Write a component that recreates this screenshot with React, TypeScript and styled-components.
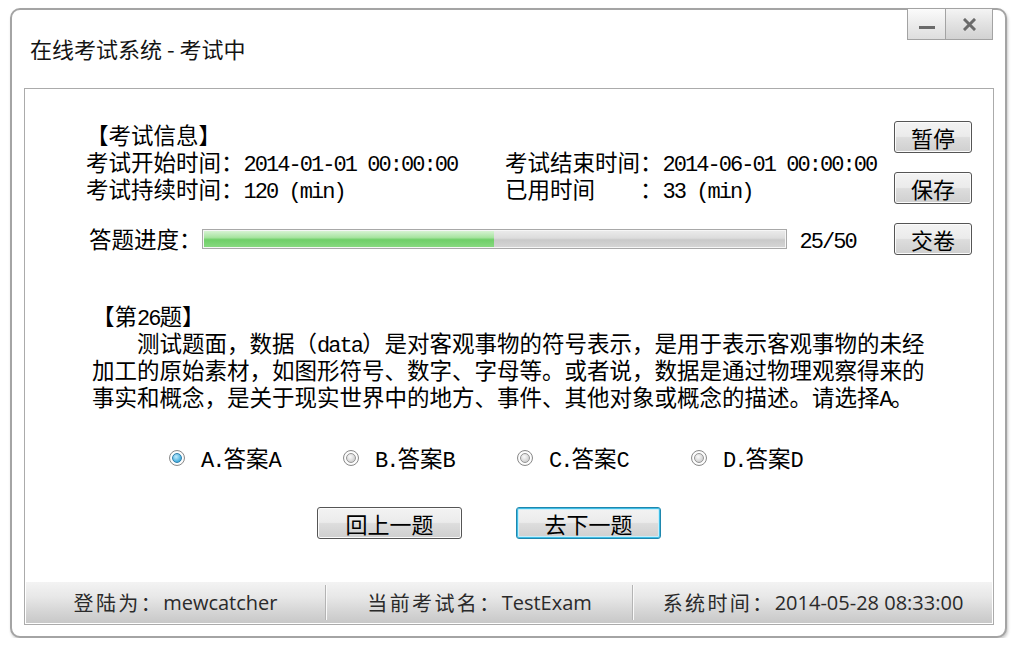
import React from "react";
import styled, { createGlobalStyle, css } from "styled-components";

const GlobalStyle = createGlobalStyle`
  html, body {
    margin: 0;
    padding: 0;
    background: #ffffff;
  }
  body {
    font-family: "Noto Sans CJK SC", sans-serif;
    color: #000;
  }
  * { box-sizing: border-box; }
`;

const CJK = `"Noto Sans CJK SC", sans-serif`;

const Window = styled.div`
  margin: 8px 11px 0 10px;
  height: 630px;
  border: 2px solid #a4a4a4;
  border-radius: 10px;
  background: #fff;
  box-shadow: 1px 2px 3px rgba(0, 0, 0, 0.22);
  display: flex;
  flex-direction: column;
`;

const TitleBar = styled.div`
  height: 78px;
  display: flex;
  align-items: flex-start;
  padding: 0 12px 0 18px;
`;

const Title = styled.div`
  font-family: ${CJK};
  font-size: 22px;
  line-height: 28px;
  padding-top: 24px;
  color: #141414;
`;

const WinButtons = styled.div`
  margin-left: auto;
  margin-top: -2px;
  display: flex;
`;

const WinButton = styled.div<{ $w: number; $close?: boolean }>`
  width: ${(p) => p.$w}px;
  height: 32px;
  border: 1px solid #a3a3a3;
  display: flex;
  align-items: center;
  justify-content: center;
  background: ${(p) =>
    p.$close
      ? "linear-gradient(#f4f4f4, #e2e2e2 50%, #d2d2d2)"
      : "linear-gradient(#fbfbfb, #ececec 50%, #dedede)"};
  & + & {
    border-left: none;
  }
`;

const Panel = styled.div`
  flex: 1;
  margin: 0 11px 11px 12px;
  border: 1px solid #ababab;
  display: flex;
  flex-direction: column;
`;

const Content = styled.div`
  flex: 1;
  display: flex;
  flex-direction: column;
  font-family: ${CJK};
  font-size: 22.5px;
  line-height: 27px;
  color: #000;
`;

const TopSection = styled.div`
  display: flex;
  align-items: flex-start;
  padding: 32px 21px 0 61px;
`;

const Info = styled.div`
  flex: 1;
`;

const Heading = styled.div`
  height: 27px;
  line-height: 27px;
  white-space: nowrap;
`;

const InfoGrid = styled.div`
  display: grid;
  grid-template-columns: 419px auto;
  grid-auto-rows: 27px;
  white-space: nowrap;
`;

const Mono = styled.span`
  font-family: "Liberation Mono", monospace;
  font-size: 22px;
  letter-spacing: -1.95px;
  line-height: 0;
  white-space: pre;
`;

const ProgressRow = styled.div`
  display: flex;
  align-items: center;
  height: 27px;
  margin-top: 23px;
  padding-left: 3px;
  white-space: nowrap;
`;

const Bar = styled.div`
  width: 585px;
  height: 20px;
  border: 1px solid #a8a8a8;
  box-shadow: inset 0 0 0 1px #f6f6f6;
  background: linear-gradient(#ececec, #dcdcdc 45%, #c9c9c9 55%, #d6d6d6);
  padding: 1px;
  display: flex;
`;

const BarFill = styled.div`
  height: 100%;
  background: linear-gradient(#d6f3d2, #a8e4a1 40%, #6fcf68 55%, #86d97f);
`;

const Count = styled.span`
  margin-left: 13px;
`;

const SideButtons = styled.div`
  display: flex;
  flex-direction: column;
  gap: 19px;
`;

const PushButton = styled.div<{ $w: number; $focused?: boolean }>`
  width: ${(p) => p.$w}px;
  height: 32px;
  border-radius: 3px;
  border: 1px solid #555555;
  display: flex;
  align-items: center;
  justify-content: center;
  font-family: ${CJK};
  font-size: 22px;
  line-height: 1;
  color: #000;
  background: linear-gradient(#f3f3f3, #ebebeb 48%, #dddddd 52%, #cfcfcf);
  box-shadow: inset 0 0 0 1px #fbfbfb;
  ${(p) =>
    p.$focused &&
    css`
      border-color: #1f87ad;
      box-shadow: inset 0 0 0 1px #3fbde6, inset 0 0 0 2px #c9eef9;
    `}
`;

const Question = styled.div`
  margin-top: 47px;
  padding-left: 67px;
`;

const Paragraph = styled.p`
  margin: 0;
  width: 845px;
  text-indent: 2em;
  line-height: 27px;
`;

const Options = styled.div`
  display: flex;
  align-items: center;
  margin-top: 34px;
  padding-left: 144px;
  height: 27px;
`;

const Option = styled.div`
  width: 174px;
  display: flex;
  align-items: center;
  gap: 16px;
  white-space: nowrap;
  line-height: 27px;
`;

const Radio = styled.span<{ $checked?: boolean }>`
  width: 16px;
  height: 16px;
  border-radius: 50%;
  border: 1px solid #8a8a8a;
  background: radial-gradient(circle, #ffffff 55%, #e4e4e4);
  display: flex;
  align-items: center;
  justify-content: center;
  flex: none;
  &::after {
    content: "";
    width: 10px;
    height: 10px;
    border-radius: 50%;
    box-sizing: border-box;
    ${(p) =>
      p.$checked
        ? css`
            border: 1px solid #2f7fab;
            background: radial-gradient(circle at 40% 35%, #c4ecfd, #45aede 70%);
          `
        : css`
            border: 1px solid #959595;
            background: radial-gradient(circle at 40% 35%, #fafafa, #cfcfcf 75%);
          `}
  }
`;

const NavRow = styled.div`
  display: flex;
  gap: 54px;
  margin-top: 36px;
  padding-left: 292px;
`;

const StatusBar = styled.div`
  height: 41px;
  margin: 0 1px 1px;
  display: flex;
  align-items: stretch;
  background: linear-gradient(#f3f3f3, #e8e8e8 35%, #d6d6d6 70%, #c8c8c8);
  font-family: "Open Sans", "Noto Sans CJK SC", sans-serif;
  font-size: 20px;
  color: #2a2a2a;
`;

const StatusCell = styled.div<{ $w?: number }>`
  ${(p) => (p.$w ? `width: ${p.$w}px;` : "flex: 1;")}
  display: flex;
  align-items: center;
  justify-content: center;
  white-space: nowrap;
`;

const StatusLabel = styled.span`
  font-family: "Noto Sans CJK SC", sans-serif;
  letter-spacing: 2.4px;
`;

const Separator = styled.div`
  width: 2px;
  margin: 3px 0;
  background: linear-gradient(to right, #b4b4b4 50%, #fafafa 50%);
`;

export default function App() {
  const options = ["A", "B", "C", "D"];
  return (
    <>
      <GlobalStyle />
      <Window>
        <TitleBar>
          <Title>在线考试系统 - 考试中</Title>
          <WinButtons>
            <WinButton $w={39}>
              <svg width="16" height="14" viewBox="0 0 16 14">
                <rect x="0" y="9" width="16" height="3" fill="#6a6a6a" />
              </svg>
            </WinButton>
            <WinButton $w={47} $close>
              <svg width="13" height="13" viewBox="0 0 13 13">
                <path d="M2 2 L11 11 M11 2 L2 11" stroke="#6a6a6a" strokeWidth="3" strokeLinecap="square" />
              </svg>
            </WinButton>
          </WinButtons>
        </TitleBar>
        <Panel>
          <Content>
            <TopSection>
              <Info>
                <Heading>【考试信息】</Heading>
                <InfoGrid>
                  <div>
                    考试开始时间：<Mono>2014-01-01 00:00:00</Mono>
                  </div>
                  <div>
                    考试结束时间：<Mono>2014-06-01 00:00:00</Mono>
                  </div>
                  <div>
                    考试持续时间：<Mono>120 (min)</Mono>
                  </div>
                  <div>
                    已用时间<Mono>    </Mono>：<Mono>33 (min)</Mono>
                  </div>
                </InfoGrid>
                <ProgressRow>
                  答题进度：
                  <Bar>
                    <BarFill style={{ width: `${(25 / 50) * 100}%` }} />
                  </Bar>
                  <Count>
                    <Mono>25/50</Mono>
                  </Count>
                </ProgressRow>
              </Info>
              <SideButtons>
                <PushButton $w={78}>暂停</PushButton>
                <PushButton $w={78}>保存</PushButton>
                <PushButton $w={78}>交卷</PushButton>
              </SideButtons>
            </TopSection>
            <Question>
              <Heading>
                【第<Mono>26</Mono>题】
              </Heading>
              <Paragraph>
                测试题面，数据（<Mono>data</Mono>）是对客观事物的符号表示，是用于表示客观事物的未经加工的原始素材，如图形符号、数字、字母等。或者说，数据是通过物理观察得来的事实和概念，是关于现实世界中的地方、事件、其他对象或概念的描述。请选择<Mono>A</Mono>。
              </Paragraph>
            </Question>
            <Options>
              {options.map((o, i) => (
                <Option key={o}>
                  <Radio $checked={i === 0} />
                  <span>
                    <Mono>{o}.</Mono>答案<Mono>{o}</Mono>
                  </span>
                </Option>
              ))}
            </Options>
            <NavRow>
              <PushButton $w={145}>回上一题</PushButton>
              <PushButton $w={145} $focused>
                去下一题
              </PushButton>
            </NavRow>
          </Content>
          <StatusBar>
            <StatusCell $w={299}>
              <StatusLabel>登陆为：</StatusLabel>mewcatcher
            </StatusCell>
            <Separator />
            <StatusCell $w={305}>
              <StatusLabel>当前考试名：</StatusLabel>TestExam
            </StatusCell>
            <Separator />
            <StatusCell>
              <StatusLabel>系统时间：</StatusLabel>2014-05-28 08:33:00
            </StatusCell>
          </StatusBar>
        </Panel>
      </Window>
    </>
  );
}
